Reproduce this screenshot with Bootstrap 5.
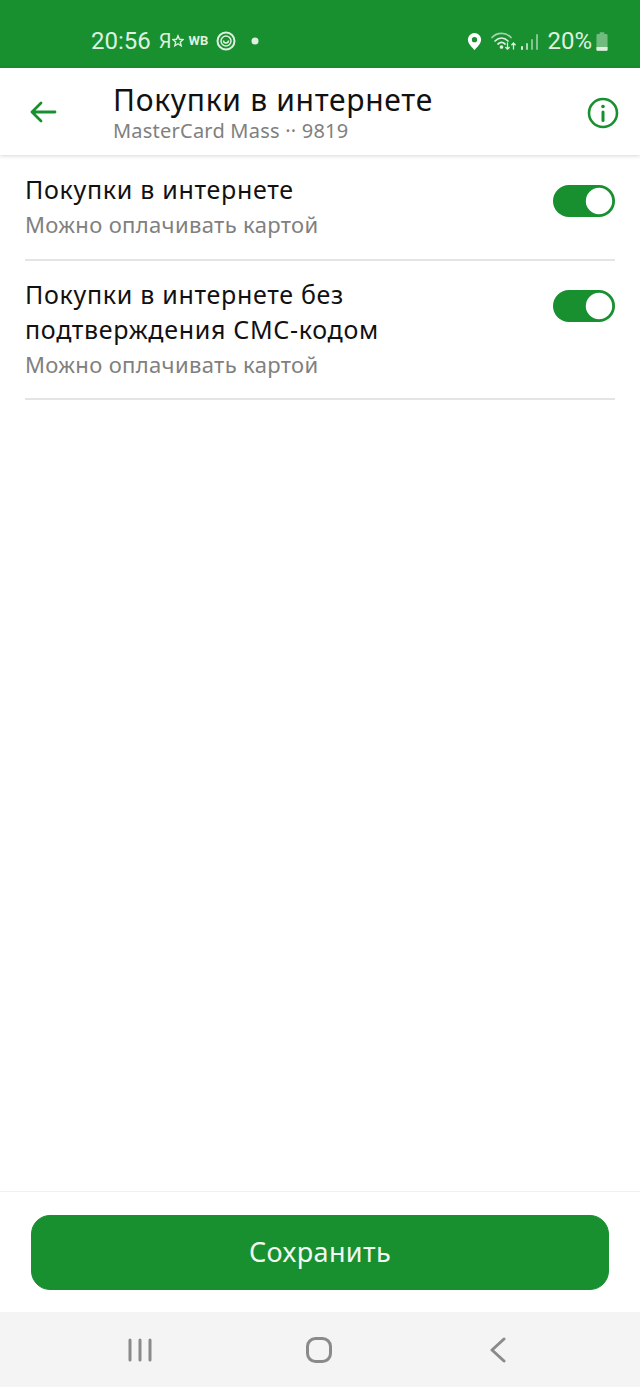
<!DOCTYPE html>
<html lang="ru">
<head>
  <meta charset="UTF-8"/>
  <meta name="viewport" content="width=device-width, initial-scale=1.0"/>
  <title>Покупки в интернете</title>
  <link href="https://cdn.jsdelivr.net/npm/bootstrap@5.3.0/dist/css/bootstrap.min.css" rel="stylesheet"/>
  <style>
    body { font-family: "Noto Sans", "Open Sans", sans-serif; color: #111; background: #fff; }
    .screen { height: 1387px; }
    .status-bar { height: 68px; background: #189030; color: #dff0e0; font-family: Roboto, sans-serif; padding: 14px 32px 0 91px; }
    .status-time { font-size: 24px; }
    .status-pct { font-size: 24px; }
    .status-wb { font-size: 13px; font-weight: 700; margin-left: 5px; }
    .status-ya { font-size: 20px; margin-left: 8px; }
    .status-target { margin-left: 8px; }
    .status-dot { margin-left: 15px; }
    .status-signal { margin-left: 4px; }
    .status-batt { margin-left: 4px; }
    .top-bar { height: 87px; box-shadow: 0 1px 4px rgba(0,0,0,.16); position: relative; }
    .back-btn { width: 113px; padding: 30px 0 0 29px; }
    .title-main { font-size: 30px; line-height: 34px; margin-top: 15px; letter-spacing: .7px; }
    .title-sub { font-size: 20px; line-height: 24px; margin-top: 2px; color: #808080; letter-spacing: .22px; }
    .info-btn { margin-right: 21px; padding-top: 29px; }
    .opt-row { margin: 0 25px; border-bottom: 2px solid #e4e4e4; padding-top: 17px; }
    .opt-one { height: 106px; }
    .opt-two { height: 139px; padding-top: 16px; }
    .opt-name { font-size: 25px; line-height: 35px; letter-spacing: .7px; }
    .opt-note { font-size: 22px; line-height: 35px; color: #808080; letter-spacing: .35px; }
    .form-switch.green-switch { padding: 13px 0 0; margin: 0; min-height: 0; }
    .form-switch.green-switch .form-check-input {
      width: 62px; height: 32px; margin: 0; border: 0; float: none; display: block;
      background-color: #189030;
      background-image: url("data:image/svg+xml,%3csvg xmlns='http://www.w3.org/2000/svg' viewBox='-4 -4 8 8'%3e%3ccircle r='3.3' fill='%23fff'/%3e%3c/svg%3e");
    }
    .save-area { height: 121px; border-top: 1px solid #f0f0f0; padding: 23px 31px 0; }
    .save-btn { height: 75px; background: #189030; border-color: #189030; color: #f2f8f2; font-size: 27px; letter-spacing: .4px; border-radius: 19px; }
    .nav-bottom { height: 75px; background: #f4f4f4; }
    .nav-recent { margin-left: 127px; }
    .nav-home { margin-left: 153px; }
    .nav-back { margin-left: 158px; }
  </style>
</head>
<body>
  <div class="screen d-flex flex-column">

    <div class="status-bar d-flex align-items-center">
      <span class="status-time">20:56</span>
      <span class="status-ya">Я</span>
      <svg width="12" height="16" viewBox="0 0 14 16" fill="none" stroke="#dff0e0" stroke-width="1.6"><path d="M7 2l1.700 4 4.300.4-3.300 2.800 1 4.300L7 11.200 3.300 13.500l1-4.300L1 6.400 5.300 6z"/></svg>
      <span class="status-wb">WB</span>
      <svg class="status-target" width="20" height="20" viewBox="0 0 20 20" fill="none" stroke="#dff0e0"><circle cx="10" cy="10" r="8.500" stroke-width="2"/><circle cx="10" cy="10" r="5" stroke-width="1.500"/><path d="M7.500 9.500a2.500 2.500 0 0 0 5 0" stroke-width="1.500"/></svg>
      <svg class="status-dot" width="8" height="8" viewBox="0 0 8 8"><circle cx="4" cy="4" r="3.500" fill="#dff0e0"/></svg>
      <div class="ms-auto d-flex align-items-center">
        <svg width="17" height="19" viewBox="0 0 16 20"><path fill="#fff" fill-rule="evenodd" d="M8 1a7 7 0 0 0-7 7c0 4.500 5 9 7 11 2-2 7-6.500 7-11a7 7 0 0 0-7-7zm0 4.300a2.800 2.800 0 1 1 0 5.600 2.800 2.800 0 0 1 0-5.600z"/></svg>
        <svg class="ms-2" width="26" height="22" viewBox="0 0 26 22" fill="none" stroke="#dff0e0" stroke-width="1.700" stroke-linecap="round"><path d="M1 7.500C6 2 15 2 20 7.500" opacity=".7"/><path d="M4 11c4-3.800 9-3.800 13 0"/><path d="M7 14c2.500-2.200 4.500-2.200 7 0"/><circle cx="10.500" cy="17" r="1" fill="#dff0e0"/><path d="M16.500 13v6M14.800 17.500l1.700 1.700 1.700-1.700" stroke-width="1.300"/><path d="M22.500 19v-6M20.800 14.700l1.700-1.700 1.700 1.700" stroke-width="1.300"/></svg>
        <svg class="status-signal" width="18" height="20" viewBox="0 0 18 20" fill="#dff0e0"><rect x="0" y="15" width="2" height="4" rx="1"/><rect x="5" y="12" width="2" height="7" rx="1" opacity=".75"/><rect x="10" y="8" width="2" height="11" rx="1" opacity=".55"/><rect x="15" y="3" width="2" height="16" rx="1" opacity=".55"/></svg>
        <span class="status-pct ms-2">20%</span>
        <svg class="status-batt" width="12" height="19" viewBox="0 0 13 20"><path fill="#dff0e0" opacity=".45" d="M4 0h5v2h2a1.500 1.500 0 0 1 1.500 1.500V19a1 1 0 0 1-1 1H1.500a1 1 0 0 1-1-1V3.500A1.500 1.500 0 0 1 2 2h2z"/><path fill="#dff0e0" d="M.5 16h12v3a1 1 0 0 1-1 1H1.500a1 1 0 0 1-1-1z"/></svg>
      </div>
    </div>

    <div class="top-bar d-flex align-items-start bg-white">
      <div class="back-btn">
        <svg width="28" height="24" viewBox="0 0 28 24" fill="none" stroke="#189030" stroke-width="2.800" stroke-linecap="round" stroke-linejoin="round"><path d="M3 12h23M12 3l-9 9 9 9"/></svg>
      </div>
      <div class="flex-grow-1">
        <div class="title-main">Покупки в интернете</div>
        <div class="title-sub">MasterCard Mass ·· 9819</div>
      </div>
      <div class="info-btn">
        <svg width="32" height="32" viewBox="0 0 32 32" fill="none" stroke="#189030"><circle cx="16" cy="16" r="14" stroke-width="2.600"/><path d="M16 15v8.500" stroke-width="3" stroke-linecap="round"/><circle cx="16" cy="9.500" r="1.800" fill="#189030" stroke="none"/></svg>
      </div>
    </div>

    <div class="flex-grow-1">
      <div class="opt-row opt-one d-flex justify-content-between">
        <div>
          <div class="opt-name">Покупки в интернете</div>
          <div class="opt-note">Можно оплачивать картой</div>
        </div>
        <div class="form-check form-switch green-switch">
          <input class="form-check-input" type="checkbox" role="switch" checked/>
        </div>
      </div>
      <div class="opt-row opt-two d-flex justify-content-between">
        <div>
          <div class="opt-name">Покупки в интернете без<br/>подтверждения СМС-кодом</div>
          <div class="opt-note">Можно оплачивать картой</div>
        </div>
        <div class="form-check form-switch green-switch">
          <input class="form-check-input" type="checkbox" role="switch" checked/>
        </div>
      </div>
    </div>

    <div class="save-area">
      <button type="button" class="btn save-btn w-100">Сохранить</button>
    </div>

    <div class="nav-bottom d-flex align-items-center">
      <svg class="nav-recent" width="26" height="24" viewBox="0 0 26 24" fill="none" stroke="#8a8a8a" stroke-width="3" stroke-linecap="round"><path d="M3 2v20M13 2v20M23 2v20"/></svg>
      <svg class="nav-home" width="26" height="26" viewBox="0 0 26 26" fill="none" stroke="#8a8a8a" stroke-width="3"><rect x="1.500" y="1.500" width="23" height="23" rx="8"/></svg>
      <svg class="nav-back" width="16" height="26" viewBox="0 0 16 26" fill="none" stroke="#8a8a8a" stroke-width="3" stroke-linecap="round" stroke-linejoin="round"><path d="M14 2L2 13l12 11"/></svg>
    </div>
  </div>
  <script src="https://cdn.jsdelivr.net/npm/bootstrap@5.3.0/dist/js/bootstrap.bundle.min.js"></script>
</body>
</html>
